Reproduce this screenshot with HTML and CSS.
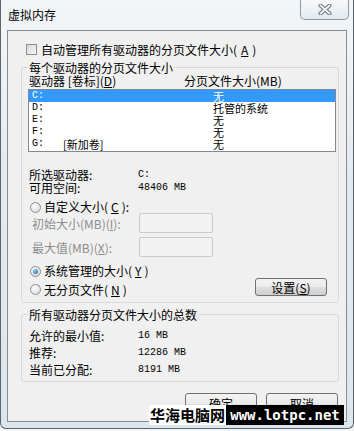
FILE: index.html
```html
<!DOCTYPE html>
<html lang="zh-CN">
<head>
  <meta charset="UTF-8">
  <title>虚拟内存</title>
  <link rel="stylesheet" href="styles.css">
</head>
<body>

  <div class="window">
    <!-- Title bar -->
    <div class="titlebar">
      <span class="title">虚拟内存</span>
      <button class="close-btn" aria-label="关闭">
        <svg width="14" height="11" viewBox="0 0 14 11">
          <path d="M2.5 1.5 L11.5 9.5 M11.5 1.5 L2.5 9.5" stroke="#6a737c" stroke-width="4" stroke-linecap="round"/>
          <path d="M2.5 1.5 L11.5 9.5 M11.5 1.5 L2.5 9.5" stroke="#eef2f5" stroke-width="2" stroke-linecap="round"/>
        </svg>
      </button>
    </div>

    <div class="client">
      <!-- Auto manage -->
      <label class="check-row"><span class="checkbox"></span>自动管理所有驱动器的分页文件大小(<u>A</u>)</label>

      <!-- Per drive -->
      <fieldset class="group">
        <legend>每个驱动器的分页文件大小</legend>
        <div class="list-head">
          <span>驱动器 [卷标](<u>D</u>)</span>
          <span>分页文件大小(MB)</span>
        </div>
        <div class="listbox">
          <div class="list-row selected"><span class="mono">C:</span><span></span><span>无</span></div>
          <div class="list-row"><span class="mono">D:</span><span></span><span>托管的系统</span></div>
          <div class="list-row"><span class="mono">E:</span><span></span><span>无</span></div>
          <div class="list-row"><span class="mono">F:</span><span></span><span>无</span></div>
          <div class="list-row"><span class="mono">G:</span><span>[新加卷]</span><span>无</span></div>
        </div>

        <div class="info-grid">
          <span>所选驱动器:</span><span class="mono">C:</span>
          <span>可用空间:</span><span class="mono">48406 MB</span>
        </div>

        <label class="radio-row"><span class="radio"></span>自定义大小(<u>C</u>):</label>
        <div class="input-row">
          <span>初始大小(MB)(<u>I</u>):</span><span class="textbox"></span>
        </div>
        <div class="input-row second">
          <span>最大值(MB)(<u>X</u>):</span><span class="textbox"></span>
        </div>

        <label class="radio-row system"><span class="radio checked"></span>系统管理的大小(<u>Y</u>)</label>
        <div class="bottom-row">
          <label class="radio-row"><span class="radio"></span>无分页文件(<u>N</u>)</label>
          <button class="win-btn set-btn">设置(<u>S</u>)</button>
        </div>
      </fieldset>

      <!-- Totals -->
      <fieldset class="group totals">
        <legend>所有驱动器分页文件大小的总数</legend>
        <div class="total-grid">
          <span>允许的最小值:</span><span class="mono">16 MB</span>
          <span>推荐:</span><span class="mono">12286 MB</span>
          <span>当前已分配:</span><span class="mono">8191 MB</span>
        </div>
      </fieldset>

      <div class="button-group">
        <button class="win-btn">确定</button>
        <button class="win-btn">取消</button>
      </div>
    </div>

    <!-- Site watermark -->
    <div class="watermark">
      <span class="wm-cn">华海电脑网</span>
      <span class="wm-url">www.lotpc.net</span>
    </div>
  </div>

</body>
</html>
```

FILE: styles.css
```css
body {
  margin: 0;
  background: #f4f7f9;
  font-family: "Noto Sans CJK SC", "Liberation Sans", sans-serif;
  font-size: 12px;
  color: #000;
}

.window {
  position: relative;
  width: 354px;
  height: 429px;
  box-sizing: border-box;
  border: 1px solid #5e6469;
  border-top: none;
  border-radius: 0 0 6px 6px;
  background: linear-gradient(180deg, #f3f6f8 0%, #e4ebf0 40%, #dbe6ec 100%);
  padding: 0 6px;
}

.titlebar {
  display: flex;
  justify-content: space-between;
  align-items: flex-start;
  height: 30px;
}

.title {
  padding: 8px 0 0 1px;
  line-height: 14px;
}

.close-btn {
  width: 49px;
  height: 20px;
  margin-right: -2px;
  padding: 0;
  border: 1px solid #8d9aa5;
  border-top: none;
  border-radius: 0 0 5px 5px;
  background: linear-gradient(180deg, #f6f9fb, #e3eaef);
  display: flex;
  justify-content: center;
  align-items: center;
}

.client {
  height: 392px;
  box-sizing: border-box;
  border: 1px solid #868d94;
  background: #f0f0f0;
  padding: 0 7px 0 13px;
}

u {
  text-decoration: underline;
  text-underline-offset: 1px;
}

.check-row {
  display: flex;
  align-items: center;
  gap: 4px;
  height: 13px;
  line-height: 13px;
  margin: 12px 0 0 5px;
}

.checkbox {
  width: 9px;
  height: 9px;
  border: 1px solid #8e8f8f;
  background: linear-gradient(135deg, #d8d8d8, #f7f7f7);
}

.group {
  margin: 5px 0 0 0;
  padding: 0 0 6px 0;
  min-width: 0;
  border: 1px solid #d3dbe2;
  border-radius: 3px;
}

.group legend {
  margin-left: 6px;
  padding: 0 1px;
  line-height: 13px;
}

.list-head {
  display: grid;
  grid-template-columns: 155px 1fr;
  padding-left: 7px;
  line-height: 13px;
}

.listbox {
  margin: 2px 2px 0 6px;
  height: 63px;
  box-sizing: border-box;
  border: 1px solid #828790;
  background: #fff;
}

.list-row {
  display: grid;
  grid-template-columns: 31px 150px 1fr;
  padding-left: 3px;
  height: 12px;
  font-size: 11px;
  line-height: 12px;
}

.list-row.selected {
  background: #3399ff;
  color: #fff;
}

.mono {
  font-family: "Liberation Mono", "DejaVu Sans Mono", monospace;
  font-size: 10px;
}

.info-grid {
  display: grid;
  grid-template-columns: 109px 1fr;
  margin-top: 16px;
  padding-left: 7px;
  line-height: 13px;
}

.radio-row {
  display: flex;
  align-items: center;
  gap: 3px;
  height: 12px;
  line-height: 12px;
  margin-top: 7px;
  padding-left: 8px;
}

.radio {
  width: 9px;
  height: 9px;
  border: 1px solid #8e8f8f;
  border-radius: 50%;
  background: radial-gradient(circle at 40% 35%, #fbfbfb, #d6d6d6);
  position: relative;
}

.radio.checked::after {
  content: "";
  position: absolute;
  left: 2px;
  top: 2px;
  width: 5px;
  height: 5px;
  border-radius: 50%;
  background: radial-gradient(circle at 35% 30%, #8cc8f5, #1f62a8);
}

.input-row {
  display: grid;
  grid-template-columns: 107px 74px;
  align-items: center;
  height: 20px;
  padding-left: 10px;
  color: #8d8d8d;
}

.input-row.second {
  margin-top: 4px;
}

.textbox {
  height: 20px;
  box-sizing: border-box;
  border: 1px solid #c6cacf;
  border-radius: 2px;
  background: #f2f2f2;
}

.radio-row.system {
  margin-top: 8px;
}

.bottom-row {
  display: flex;
  align-items: flex-end;
  margin-top: 1px;
  padding-right: 11px;
}

.bottom-row .radio-row {
  margin-top: 0;
  height: 13px;
  line-height: 13px;
}

.win-btn {
  font-family: "Noto Sans CJK SC", "Liberation Sans", sans-serif;
  font-size: 12px;
  width: 72px;
  height: 22px;
  padding: 0;
  border: 1px solid #707070;
  border-radius: 3px;
  background: linear-gradient(180deg, #f3f3f3 0%, #ebebeb 48%, #dddddd 52%, #cfcfcf 100%);
  color: #000;
  line-height: 18px;
}

.set-btn {
  margin-left: auto;
  height: 18px;
  line-height: 15px;
}

.totals {
  margin-top: 5px;
  padding-bottom: 3px;
}

.total-grid {
  display: grid;
  grid-template-columns: 109px 1fr;
  margin-top: 6px;
  padding-left: 7px;
  line-height: 17px;
}

.button-group {
  display: flex;
  justify-content: flex-end;
  gap: 9px;
  margin-top: 11px;
  padding-right: 1px;
}

.watermark {
  position: absolute;
  left: 148px;
  top: 405px;
  display: flex;
  height: 20px;
}

.wm-cn {
  width: 77px;
  background: #fff;
  color: #000;
  font-weight: bold;
  font-size: 15px;
  line-height: 20px;
  text-align: center;
}

.wm-url {
  width: 118px;
  background: #000;
  color: #fff;
  font-family: "DejaVu Sans Mono", "Liberation Mono", monospace;
  font-weight: bold;
  font-size: 14px;
  line-height: 20px;
  text-align: center;
}
```
